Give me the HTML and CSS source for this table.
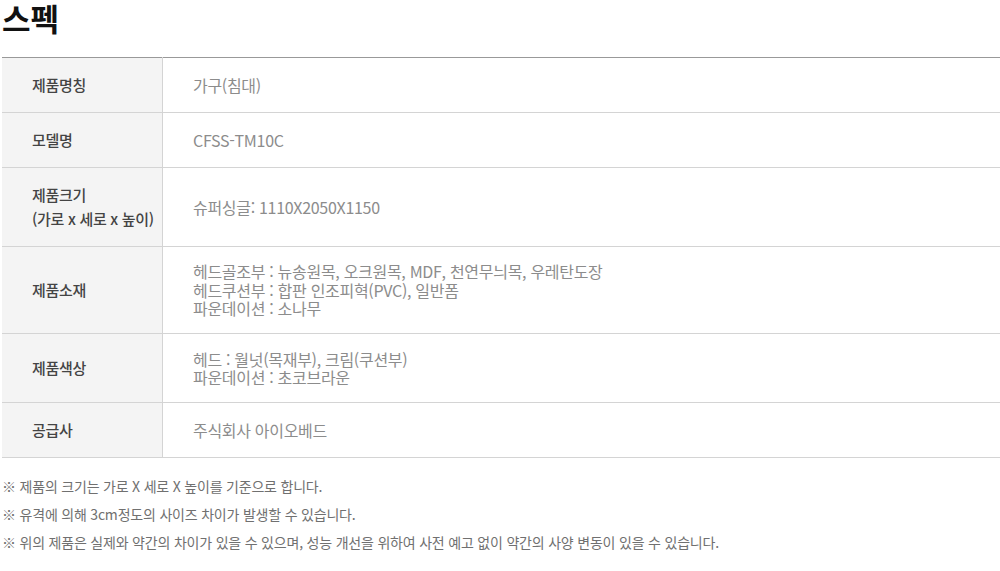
FILE: index.html
```html
<!DOCTYPE html>
<html lang="ko">
<head>
<meta charset="utf-8">
<link rel="stylesheet" href="styles.css">
</head>
<body>
<div class="wrap">
  <h2 class="title">스펙</h2>
  <table class="spec">
    <tr><th>제품명칭</th><td>가구(침대)</td></tr>
    <tr><th>모델명</th><td>CFSS-TM10C</td></tr>
    <tr><th>제품크기<br>(가로 x 세로 x 높이)</th><td>슈퍼싱글: 1110X2050X1150</td></tr>
    <tr><th>제품소재</th><td class="multi three">헤드골조부 : 뉴송원목, 오크원목, MDF, 천연무늬목, 우레탄도장<br>헤드쿠션부 : 합판 인조피혁(PVC), 일반폼<br>파운데이션 : 소나무</td></tr>
    <tr><th>제품색상</th><td class="multi">헤드 : 월넛(목재부), 크림(쿠션부)<br>파운데이션 : 초코브라운</td></tr>
    <tr><th>공급사</th><td>주식회사 아이오베드</td></tr>
  </table>
  <ul class="notes">
    <li>※ 제품의 크기는 가로 X 세로 X 높이를 기준으로 합니다.</li>
    <li>※ 유격에 의해 3cm정도의 사이즈 차이가 발생할 수 있습니다.</li>
    <li>※ 위의 제품은 실제와 약간의 차이가 있을 수 있으며, 성능 개선을 위하여 사전 예고 없이 약간의 사양 변동이 있을 수 있습니다.</li>
  </ul>
</div>
</body>
</html>
```
FILE: styles.css
```css
html, body {
  margin: 0;
  padding: 0;
  background: #fff;
}
body {
  font-family: "Noto Sans CJK KR", "Noto Sans", sans-serif;
  color: #333;
}
.wrap {
  padding-left: 2px;
}
.title {
  margin: 0;
  font-size: 31px;
  line-height: 36px;
  font-weight: 700;
  color: #111;
}
.spec {
  margin-top: 21px;
  width: 998px;
  border-collapse: collapse;
  border-top: 1px solid #999;
  font-size: 15px;
}
.spec th,
.spec td {
  border-bottom: 1px solid #d4d4d4;
  padding: 15px 0 15px 30px;
  line-height: 24px;
  vertical-align: middle;
  text-align: left;
  letter-spacing: -0.3px;
}
.spec th {
  width: 130px;
  background: #f4f4f4;
  border-right: 1px solid #d4d4d4;
  font-weight: 500;
  color: #444;
}
.spec td {
  color: #8c8c8c;
  font-size: 16px;
  font-weight: 400;
}
.spec td.multi {
  line-height: 18.5px;
  padding-top: 16px;
  padding-bottom: 15px;
}
.spec td.multi.three {
  padding-top: 15px;
  padding-bottom: 15px;
}
.notes {
  list-style: none;
  margin: 14px 0 0;
  padding: 0;
  font-size: 14px;
  color: #707070;
}
.notes li {
  line-height: 28px;
  letter-spacing: -0.2px;
}
```
